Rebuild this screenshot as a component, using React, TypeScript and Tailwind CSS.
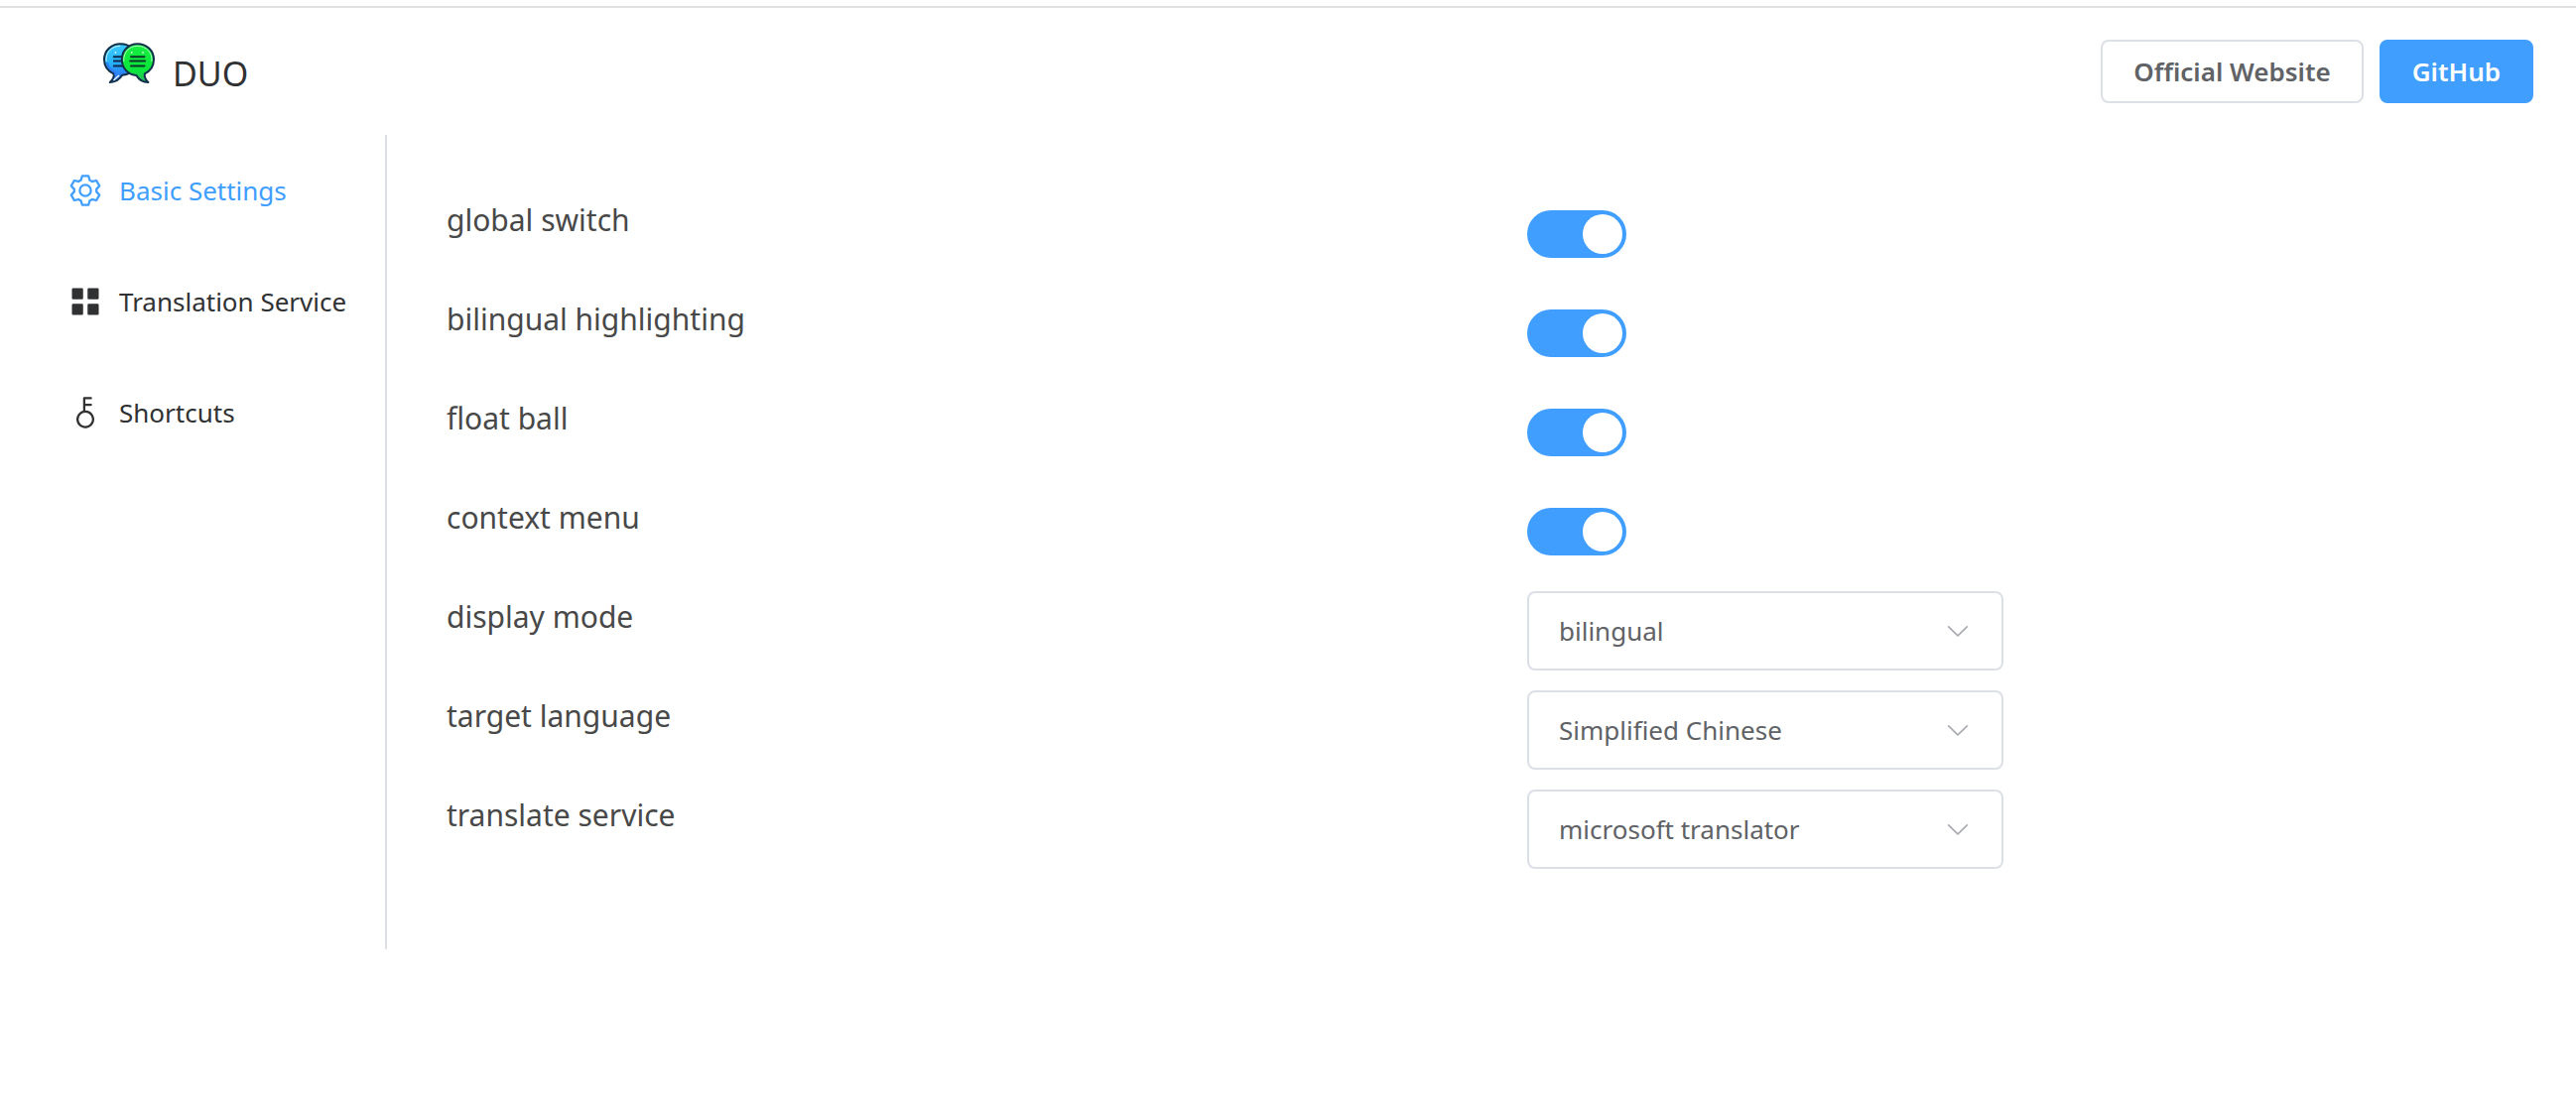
import { useState } from "react";
import type { ReactNode } from "react";

function Logo() {
  return (
    <svg viewBox="0 0 52 42" className="h-[42px] w-[52px]" aria-hidden="true">
      <defs>
        <linearGradient id="duo-blue" x1="0" y1="0" x2="0.2" y2="1">
          <stop offset="0" stopColor="#3fd0fb" />
          <stop offset="0.5" stopColor="#27b4fb" />
          <stop offset="1" stopColor="#2f6df5" />
        </linearGradient>
        <linearGradient id="duo-green" x1="0" y1="0" x2="0" y2="1">
          <stop offset="0" stopColor="#16ee3f" />
          <stop offset="0.7" stopColor="#0be63c" />
          <stop offset="1" stopColor="#2fb765" />
        </linearGradient>
      </defs>
      <path
        d="M17.500 1.200C8 1.200 1 8 1 17c0 6.500 3.600 11.600 9.600 14.300.6 3.200-1 6.200-3.800 8.700 5.200-.2 9.600-2.600 12.400-7.200C28 32 34 25.500 34 17S27 1.200 17.500 1.200Z"
        fill="url(#duo-blue)"
        stroke="#12304a"
        strokeWidth="2"
        strokeLinejoin="round"
      />
      <path d="M4 20c.8 4.600 3.600 7.800 8 9.600l.6 3.200" fill="none" stroke="#2f7cf6" strokeWidth="2" />
      <path d="M3.200 19C2 10 8.500 3.400 17 3.300" fill="none" stroke="#c9f1ff" strokeWidth="1" />
      <path d="m10.500 38 5.500-5" stroke="#e8f4ff" strokeWidth="1.500" />
      <path d="M10 14.200h10M10 18.600h10M10 23.400h10" stroke="#0d2a4d" strokeWidth="2" />
      <circle cx="12.500" cy="10" r="0.900" fill="#d8f6ff" />
      <path
        d="M34.500 1.200C25.500 1.200 18.800 8 18.800 17c0 8.800 6.500 15.500 14.600 15.900 2.600 4.500 6.800 6.900 12 7.100-2.600-2.500-4-5.500-3.600-8.700C47.500 28.600 51 23.500 51 17 51 8 44 1.200 34.500 1.200Z"
        fill="url(#duo-green)"
        stroke="#12304a"
        strokeWidth="2"
        strokeLinejoin="round"
      />
      <path d="M48.800 19C50 10 43.500 3.400 34.500 3.300 26 3.400 20 10 20.800 19" fill="none" stroke="#c4fbd0" strokeWidth="0.900" />
      <path d="M28 14.200h13.500M27.200 18.600h15M28 23.400h13.500" stroke="#0b3a26" strokeWidth="2" strokeLinecap="round" />
      <circle cx="28.700" cy="10" r="0.900" fill="#d5ffdd" />
      <circle cx="40" cy="10" r="0.900" fill="#d5ffdd" />
    </svg>
  );
}

function Glyph({ d, className }: { d: string; className: string }) {
  return (
    <svg viewBox="0 0 1024 1024" className={className} fill="currentColor" aria-hidden="true">
      <path d={d} />
    </svg>
  );
}

const GEAR =
  "M600.704 64a32 32 0 0 1 30.464 22.208l35.2 109.376c14.784 7.232 28.928 15.36 42.432 24.512l112.384-24.192a32 32 0 0 1 34.432 15.36L944.32 364.8a32 32 0 0 1-4.032 37.504l-77.12 85.12a357.12 357.12 0 0 1 0 49.024l77.12 85.248a32 32 0 0 1 4.032 37.504l-88.704 153.6a32 32 0 0 1-34.432 15.296L708.8 803.904c-13.44 9.088-27.648 17.28-42.368 24.512l-35.264 109.376A32 32 0 0 1 600.704 960H423.296a32 32 0 0 1-30.464-22.208L357.696 828.48a351.616 351.616 0 0 1-42.56-24.64l-112.32 24.256a32 32 0 0 1-34.432-15.36L79.68 659.2a32 32 0 0 1 4.032-37.504l77.12-85.248a357.12 357.12 0 0 1 0-48.896l-77.12-85.248A32 32 0 0 1 79.68 364.8l88.704-153.6a32 32 0 0 1 34.432-15.296l112.32 24.256c13.568-9.152 27.776-17.408 42.56-24.64l35.2-109.312A32 32 0 0 1 423.232 64H600.64zm-23.424 64H446.72l-36.352 113.088-24.512 11.968a294.113 294.113 0 0 0-34.816 20.096l-22.656 15.36-116.224-25.088-65.28 113.152 79.68 88.192-1.92 27.136a293.12 293.12 0 0 0 0 40.192l1.92 27.136-79.808 88.192 65.344 113.152 116.224-25.024 22.656 15.296a294.113 294.113 0 0 0 34.816 20.096l24.512 11.968L446.72 896h130.688l36.48-113.152 24.448-11.904a288.282 288.282 0 0 0 34.752-20.096l22.592-15.296 116.288 25.024 65.28-113.152-79.744-88.192 1.92-27.136a293.12 293.12 0 0 0 0-40.256l-1.92-27.136 79.808-88.128-65.344-113.152-116.288 24.96-22.592-15.232a287.616 287.616 0 0 0-34.752-20.096l-24.448-11.904L577.344 128zM512 320a192 192 0 1 1 0 384 192 192 0 0 1 0-384zm0 64a128 128 0 1 0 0 256 128 128 0 0 0 0-256z";
const TILES =
  "M160 448a32 32 0 0 1-32-32V160a32 32 0 0 1 32-32h256a32 32 0 0 1 32 32v256a32 32 0 0 1-32 32zm448 0a32 32 0 0 1-32-32V160a32 32 0 0 1 32-32h256a32 32 0 0 1 32 32v256a32 32 0 0 1-32 32zM160 896a32 32 0 0 1-32-32V608a32 32 0 0 1 32-32h256a32 32 0 0 1 32 32v256a32 32 0 0 1-32 32zm448 0a32 32 0 0 1-32-32V608a32 32 0 0 1 32-32h256a32 32 0 0 1 32 32v256a32 32 0 0 1-32 32z";
const KEY =
  "M448 456.064V96a32 32 0 0 1 32-32.064L672 64a32 32 0 0 1 0 64H512v128h160a32 32 0 0 1 0 64H512v128a256 256 0 1 1-64 8.064M512 896a192 192 0 1 0 0-384 192 192 0 0 0 0 384";
const CHEVRON =
  "M831.872 340.864 512 652.672 192.128 340.864a30.592 30.592 0 0 0-42.752 0 29.12 29.12 0 0 0 0 41.600L489.664 714.240a32 32 0 0 0 44.672 0l340.288-331.712a29.120 29.120 0 0 0 0-41.728 30.592 30.592 0 0 0-42.752 0z";

const menu = [
  { label: "Basic Settings", icon: GEAR },
  { label: "Translation Service", icon: TILES },
  { label: "Shortcuts", icon: KEY },
];

const switches = [
  { id: "global-switch", label: "global switch" },
  { id: "bilingual-highlighting", label: "bilingual highlighting" },
  { id: "float-ball", label: "float ball" },
  { id: "context-menu", label: "context menu" },
];

const selects = [
  { id: "display-mode", label: "display mode", options: ["bilingual", "translation only"] },
  { id: "target-language", label: "target language", options: ["Simplified Chinese", "English"] },
  { id: "translate-service", label: "translate service", options: ["microsoft translator", "google translator"] },
];

function Row({ id, label, children }: { id: string; label: string; children: ReactNode }) {
  return (
    <div className="grid h-20 grid-cols-2 gap-8">
      <label htmlFor={id} className="text-[30px] leading-[52px] text-[#484848]">
        {label}
      </label>
      <div className="flex items-center">{children}</div>
    </div>
  );
}

export default function App() {
  const [active, setActive] = useState(0);

  return (
    <div className="mt-1.5 border-t-2 border-[#e1e1e1] bg-white font-['Noto_Sans',sans-serif] text-[#303133]">
      <header className="flex h-32 items-center justify-between pr-[43px] pl-[104px]">
        <div className="flex items-center gap-[18px]">
          <div className="pb-4">
            <Logo />
          </div>
          <span className="pt-1 text-[34px] leading-[48px]">DUO</span>
        </div>
        <div className="flex gap-4">
          <a
            href="#website"
            className="flex h-16 items-center rounded-lg border-2 border-[#dcdfe6] px-[31px] text-[26px] font-semibold text-[#606266]"
          >
            Official Website
          </a>
          <a
            href="#github"
            className="flex h-16 items-center rounded-lg border-2 border-[#409eff] bg-[#409eff] px-[31px] text-[26px] font-semibold text-white"
          >
            GitHub
          </a>
        </div>
      </header>

      <div className="flex">
        <nav className="h-[821px] w-[390px] shrink-0 border-r-2 border-[#dcdfe6]">
          {menu.map((item, i) => (
            <button
              key={item.label}
              type="button"
              onClick={() => setActive(i)}
              className={
                "flex h-28 w-full items-center gap-4 pl-[68px] text-[26px] whitespace-nowrap " +
                (i === active ? "text-[#409eff]" : "text-[#303133]")
              }
            >
              <Glyph d={item.icon} className="size-9 shrink-0" />
              {item.label}
            </button>
          ))}
        </nav>

        <main className="flex flex-1 flex-col gap-5 pt-[60px] pl-[60px]">
          {switches.map((s) => (
            <Row key={s.id} id={s.id} label={s.label}>
              <input
                id={s.id}
                type="checkbox"
                role="switch"
                defaultChecked
                className="flex h-12 w-[100px] cursor-pointer appearance-none items-center rounded-full bg-[#dcdfe6] px-1 before:size-10 before:rounded-full before:bg-white before:content-[''] checked:justify-end checked:bg-[#409eff]"
              />
            </Row>
          ))}
          {selects.map((s) => (
            <Row key={s.id} id={s.id} label={s.label}>
              <div className="relative w-[480px]">
                <select
                  id={s.id}
                  className="h-20 w-full appearance-none rounded-lg border-2 border-[#dcdfe6] bg-white pr-16 pl-[30px] text-[26px] text-[#606266]"
                >
                  {s.options.map((o) => (
                    <option key={o}>{o}</option>
                  ))}
                </select>
                <Glyph
                  d={CHEVRON}
                  className="pointer-events-none absolute inset-y-0 right-8 my-auto size-7 text-[#a8abb2]"
                />
              </div>
            </Row>
          ))}
        </main>
      </div>
    </div>
  );
}
